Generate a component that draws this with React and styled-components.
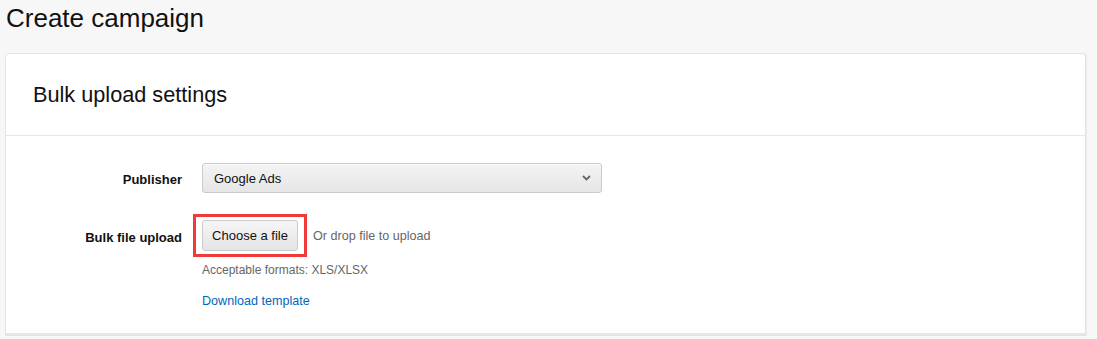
import React from "react";
import styled, { createGlobalStyle } from "styled-components";

const Global = createGlobalStyle`
  html, body { margin: 0; padding: 0; background: #f7f7f7; }
  body { font-family: "Amazon Ember", "Liberation Sans", Arial, sans-serif; color: #111; }
  * { box-sizing: border-box; }
`;

const Page = styled.div`
  padding: 0 11px 0 5px;
  min-height: 339px;
  background: #f7f7f7;
`;

const Title = styled.h1`
  margin: 0;
  padding: 2px 0 0 1px;
  height: 53px;
  font-size: 26px;
  font-weight: 400;
  line-height: 32px;
  color: #111;
`;

const Card = styled.section`
  background: #fff;
  border: 1px solid #e3e3e3;
  border-radius: 4px 4px 0 0;
  box-shadow: 1px 0 0 #ececec;
`;

const CardHeader = styled.header`
  height: 82px;
  display: flex;
  align-items: center;
  padding: 0 27px;
  border-bottom: 1px solid #e7e7e7;
`;

const CardTitle = styled.h2`
  margin: 0;
  padding-top: 1px;
  font-size: 21.7px;
  font-weight: 400;
  color: #111;
`;

const CardBody = styled.div`
  padding: 27px 0 25px;
  border-bottom: 2px solid #e7e7e7;
  display: grid;
  grid-template-columns: 176px 1fr;
  column-gap: 20px;
  row-gap: 27px;
  align-items: center;
`;

const Label = styled.label`
  justify-self: end;
  font-size: 13px;
  font-weight: 700;
  color: #111;
  padding-top: 3px;
`;

const Select = styled.div`
  width: 400px;
  height: 30px;
  display: flex;
  align-items: center;
  justify-content: space-between;
  padding: 0 10px 0 11px;
  border: 1px solid #c9cbcf;
  border-radius: 3px;
  background: linear-gradient(#f4f4f4, #e6e6e6);
  box-shadow: 0 1px 0 rgba(255,255,255,0.6) inset;
  font-size: 13px;
  color: #111;
`;

const Chevron = styled.svg`
  width: 9px;
  height: 6px;
`;

const UploadLine = styled.div`
  display: flex;
  align-items: center;
  gap: 15px;
`;

const ButtonWrap = styled.div`
  position: relative;
  display: inline-flex;
`;

const Highlight = styled.span`
  position: absolute;
  left: -9px;
  top: -6px;
  right: -9px;
  bottom: -6px;
  border: 3px solid #f03a3a;
  pointer-events: none;
`;

const FileButton = styled.button`
  height: 31px;
  width: 96px;
  padding: 0;
  font-family: inherit;
  font-size: 13px;
  color: #111;
  border: 1px solid #c9cbcf;
  border-radius: 3px;
  background: linear-gradient(#f6f6f6, #e4e4e4);
  cursor: pointer;
`;

const Hint = styled.span`
  font-size: ${(p) => p.$size || 12}px;
  color: #666;
`;

const Extra = styled.div`
  grid-column: 2;
  display: flex;
  flex-direction: column;
  gap: 17px;
  margin-top: -15px;
`;

const Link = styled.a`
  font-size: 12.6px;
  color: #0066c0;
  text-decoration: none;
`;

export default function App() {
  return (
    <Page>
      <Global />
      <Title>Create campaign</Title>
      <Card>
        <CardHeader>
          <CardTitle>Bulk upload settings</CardTitle>
        </CardHeader>
        <CardBody>
          <Label>Publisher</Label>
          <Select>
            <span>Google Ads</span>
            <Chevron viewBox="0 0 9 6">
              <path d="M1 1l3.5 3.5L8 1" fill="none" stroke="#666" strokeWidth="1.8" />
            </Chevron>
          </Select>
          <Label>Bulk file upload</Label>
          <UploadLine>
            <ButtonWrap>
              <FileButton>Choose a file</FileButton>
              <Highlight />
            </ButtonWrap>
            <Hint $size={12.6}>Or drop file to upload</Hint>
          </UploadLine>
          <Extra>
            <Hint>Acceptable formats: XLS/XLSX</Hint>
            <Link href="#">Download template</Link>
          </Extra>
        </CardBody>
      </Card>
    </Page>
  );
}
